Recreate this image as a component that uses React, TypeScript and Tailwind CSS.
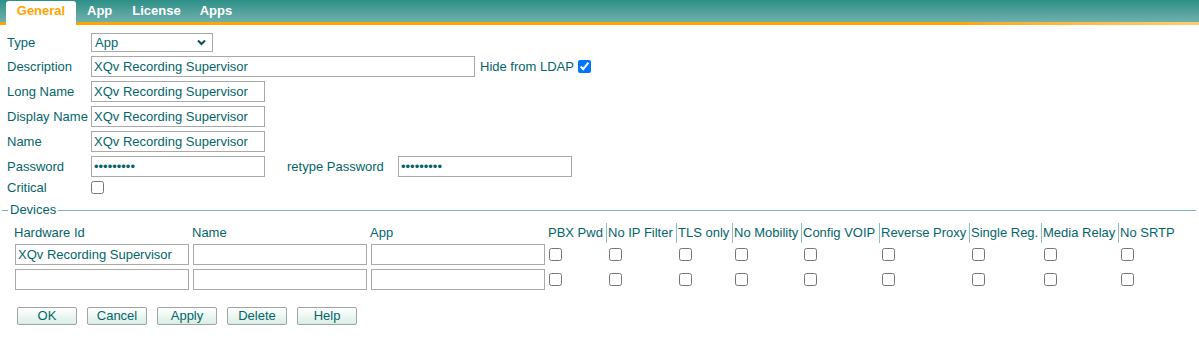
import React from 'react';

const checkCols = [
  { label: 'PBX Pwd', w: 'w-[58px]', first: true },
  { label: 'No IP Filter', w: 'w-[70px]' },
  { label: 'TLS only', w: 'w-[56px]' },
  { label: 'No Mobility', w: 'w-[69px]' },
  { label: 'Config VOIP', w: 'w-[78px]' },
  { label: 'Reverse Proxy', w: 'w-[90px]' },
  { label: 'Single Reg.', w: 'w-[72px]' },
  { label: 'Media Relay', w: 'w-[77px]' },
  { label: 'No SRTP', w: 'w-[70px]' },
];

const inputCls =
  'h-[21px] border border-[#a9a9a9] bg-white px-[2px] text-[13px] text-[#03656b] outline-none';

const Box = ({ checked = false, className = '' }: { checked?: boolean; className?: string }) => (
  <input type="checkbox" defaultChecked={checked} className={`m-0 h-[13px] w-[13px] ${className}`} />
);

const Row = ({ label, children, className = 'h-[21px] mt-[4px]' }: { label: string; children: React.ReactNode; className?: string }) => (
  <div className={`flex items-center ${className}`}>
    <div className="w-[84px] shrink-0 whitespace-nowrap">{label}</div>
    {children}
  </div>
);

const Btn = ({ label }: { label: string }) => (
  <button className="h-[18px] w-[60px] rounded-[2px] border border-[#a3a3a3] bg-gradient-to-b from-white to-[#d9eee4] text-[13px] leading-[16px] text-[#03656b]">
    {label}
  </button>
);

const DeviceRow = ({ hw = '' }: { hw?: string }) => (
  <div className="flex h-[21px] items-center">
    {[hw, '', ''].map((v, i) => (
      <div key={i} className="w-[178px] shrink-0 pl-[1px]">
        <input readOnly defaultValue={v} className={`${inputCls} w-[174px]`} />
      </div>
    ))}
    {checkCols.map((c, i) => (
      <div key={c.label} className={`${c.w} shrink-0 flex ${i === 0 ? 'pl-[1px]' : 'pl-[3px]'}`}>
        <Box />
      </div>
    ))}
  </div>
);

export default function App() {
  return (
    <div className="h-[341px] w-[1199px] overflow-hidden bg-white font-['Liberation_Sans',Arial,sans-serif] text-[13px] text-[#03656b]">
      {/* tab bar */}
      <div className="relative h-[25px]">
        <div className="h-[22px] bg-gradient-to-b from-[#2a9088] to-[#6eb0ac]" />
        <div className="h-[3px] bg-gradient-to-r from-[#ffa500] from-80% to-[#ffcd6e]" />
        <div className="absolute left-0 top-0 flex h-[25px] items-start pl-[6px] pt-[1px] text-[13px] font-bold leading-[16px]">
          <div className="h-[24px] w-[70px] rounded-t-[3px] bg-white pt-[2px] text-center text-[#ffa500]">
            General
          </div>
          <div className="pl-[11px] pr-[20px] pt-[2px] text-white">App</div>
          <div className="pr-[19px] pt-[2px] text-white">License</div>
          <div className="pt-[2px] text-white">Apps</div>
        </div>
      </div>

      <div className="pl-[7px]">
        <Row label="Type" className="mt-[8px] h-[19px]">
          <div className="relative flex h-[19px] w-[122px] items-center border border-[#a9a9a9] pl-[3px]">
            App
            <svg className="absolute right-[6px] top-[5px]" width="9" height="7" viewBox="0 0 9 7">
              <path d="M1 1.5 L4.5 5 L8 1.5" fill="none" stroke="#0b4f52" strokeWidth="2" />
            </svg>
          </div>
        </Row>
        <Row label="Description">
          <input readOnly defaultValue="XQv Recording Supervisor" className={`${inputCls} w-[384px]`} />
          <span className="ml-[5px]">Hide from LDAP</span>
          <Box checked className="ml-[4px]" />
        </Row>
        <Row label="Long Name">
          <input readOnly defaultValue="XQv Recording Supervisor" className={`${inputCls} w-[174px]`} />
        </Row>
        <Row label="Display Name">
          <input readOnly defaultValue="XQv Recording Supervisor" className={`${inputCls} w-[174px]`} />
        </Row>
        <Row label="Name">
          <input readOnly defaultValue="XQv Recording Supervisor" className={`${inputCls} w-[174px]`} />
        </Row>
        <Row label="Password">
          <input type="password" readOnly defaultValue="123456789" className={`${inputCls} w-[174px]`} />
          <span className="ml-[22px] w-[111px]">retype Password</span>
          <input type="password" readOnly defaultValue="123456789" className={`${inputCls} w-[174px]`} />
        </Row>
        <Row label="Critical" className="mt-[2px] h-[17px]">
          <Box />
        </Row>
      </div>

      {/* Devices fieldset */}
      <div className="mt-[6px] flex h-[16px] items-center pl-[2px] pr-[3px]">
        <div className="w-[6px] border-t border-[#7ab5b3]" />
        <span className="px-[2px]">Devices</span>
        <div className="flex-1 border-t border-[#7ab5b3]" />
      </div>

      <div className="pl-[14px]">
        <div className="mt-[7px] flex h-[16px] items-center">
          <div className="w-[178px] shrink-0">Hardware Id</div>
          <div className="w-[178px] shrink-0">Name</div>
          <div className="w-[178px] shrink-0">App</div>
          {checkCols.map((c) => (
            <div
              key={c.label}
              className={`${c.w} shrink-0 whitespace-nowrap ${c.first ? '' : 'border-l border-[#86c3c1] pl-[1px]'}`}
            >
              {c.label}
            </div>
          ))}
        </div>
        <div className="mt-[3px]">
          <DeviceRow hw="XQv Recording Supervisor" />
        </div>
        <div className="mt-[4px]">
          <DeviceRow />
        </div>
        <div className="mt-[17px] flex gap-[10px] pl-[3px]">
          <Btn label="OK" />
          <Btn label="Cancel" />
          <Btn label="Apply" />
          <Btn label="Delete" />
          <Btn label="Help" />
        </div>
      </div>
    </div>
  );
}
